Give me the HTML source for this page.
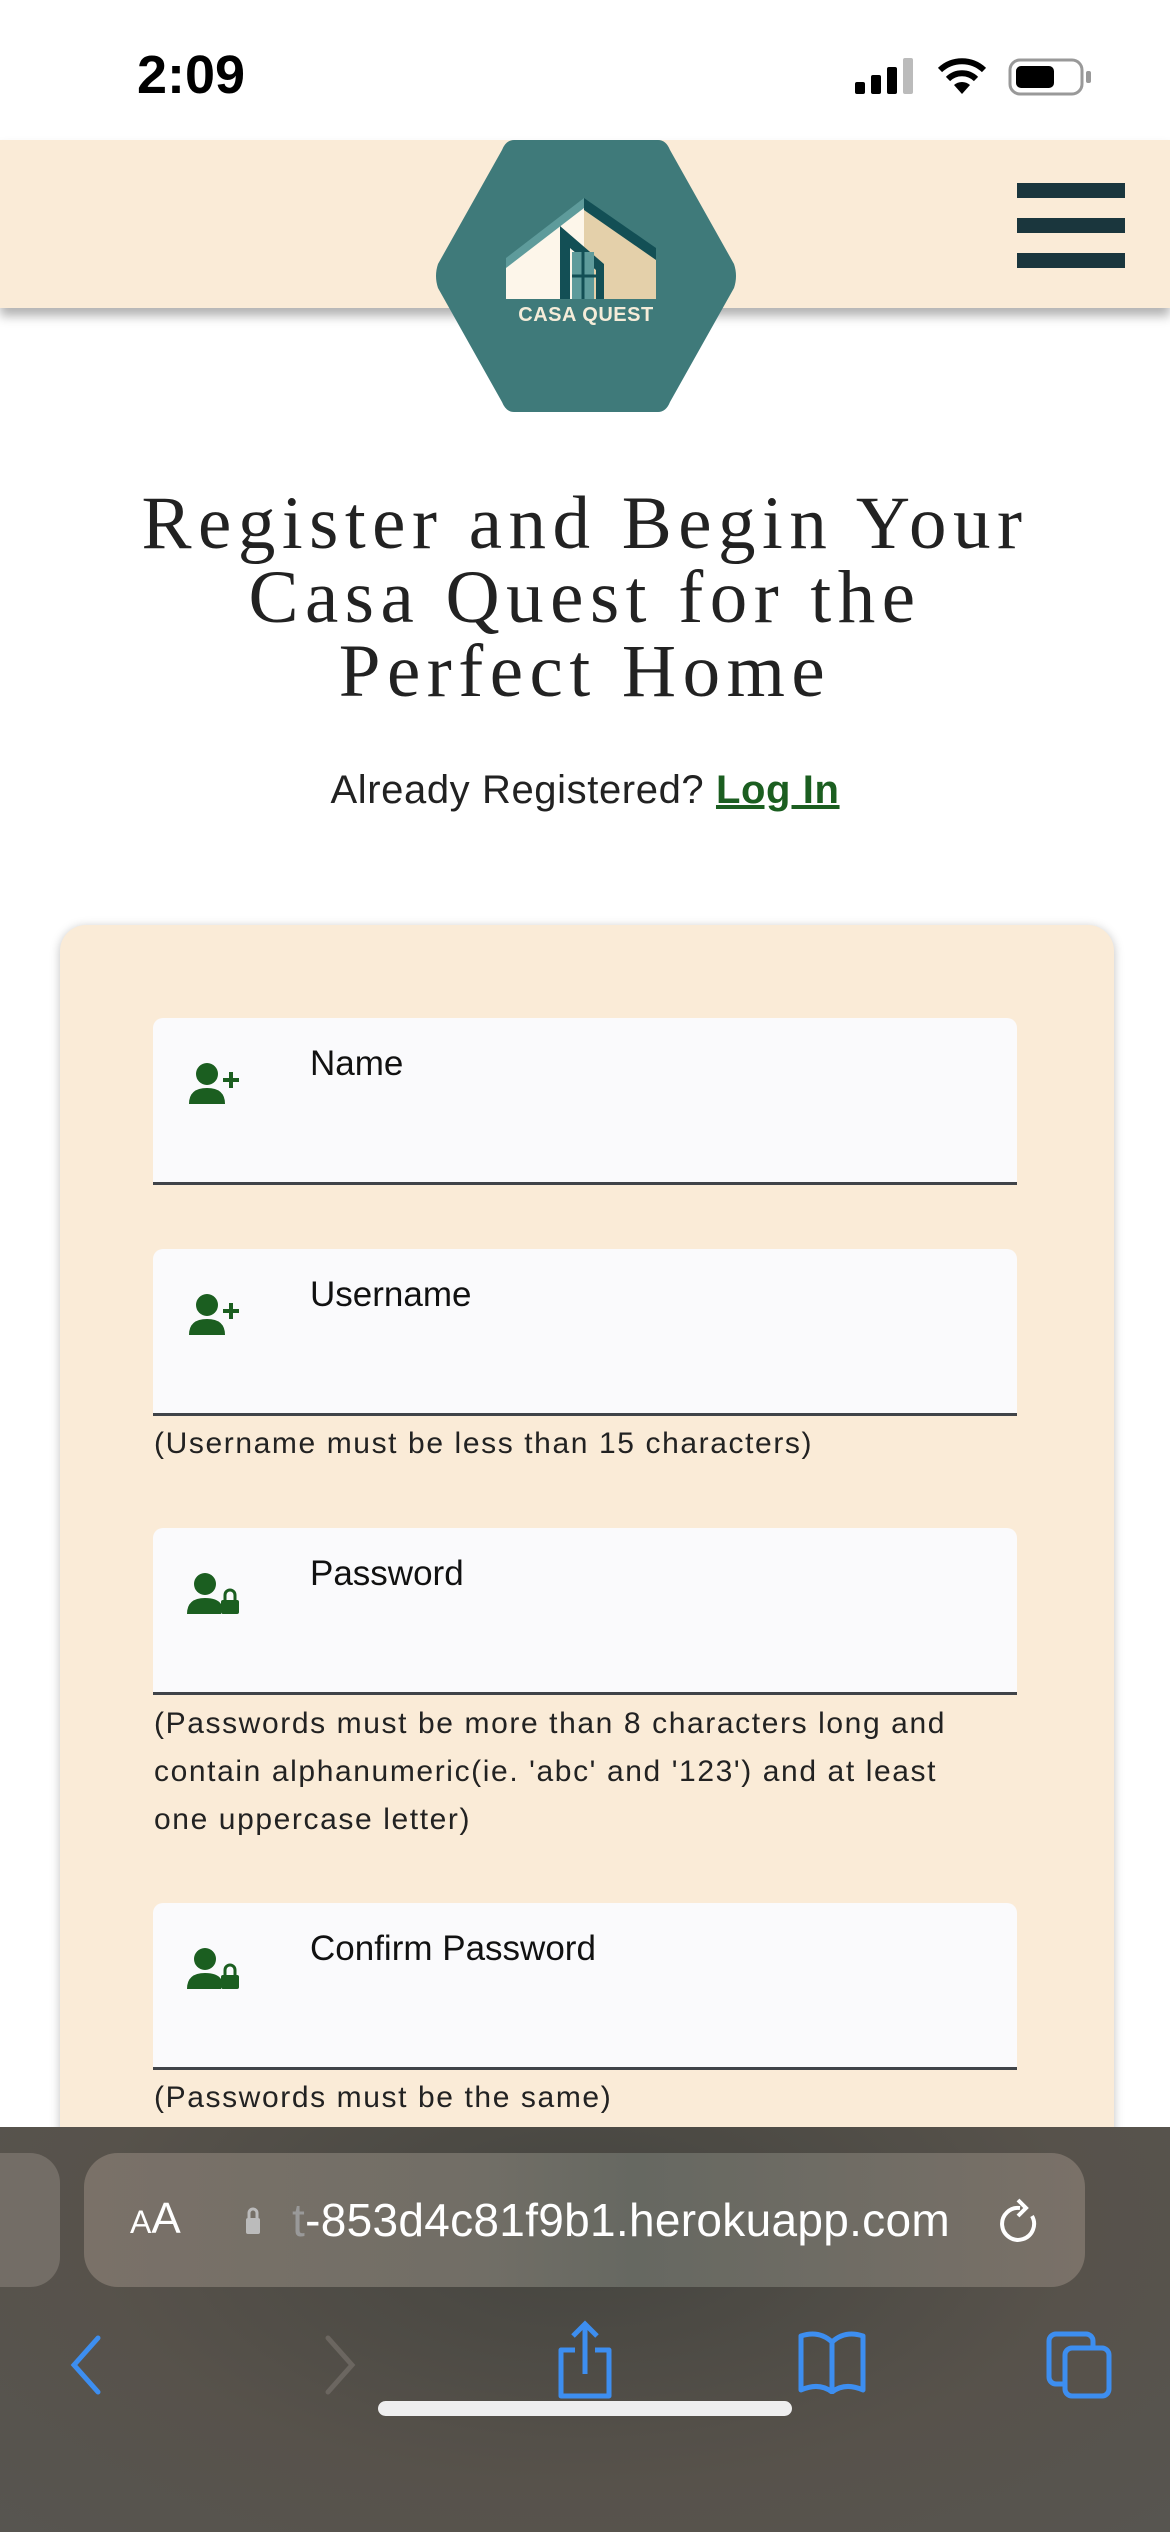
<!DOCTYPE html>
<html><head><meta charset="utf-8"><style>
*{margin:0;padding:0;box-sizing:border-box}
body{width:1170px;height:2532px;position:relative;overflow:hidden;background:#fff;font-family:"Liberation Sans",sans-serif}
.abs{position:absolute}
.hdr{left:0;top:140px;width:1170px;height:168px;background:#faebd7;box-shadow:0 8px 10px rgba(0,0,0,.3)}
.bar{left:1017px;width:108px;height:15px;background:#1a363d}
h1{position:absolute;left:0;width:1170px;top:487px;text-align:center;font-family:"Liberation Serif",serif;font-weight:normal;font-size:75px;line-height:74px;letter-spacing:6.5px;color:#222}
.card{left:60px;top:925px;width:1054px;height:1300px;background:#faebd7;border-radius:26px;box-shadow:0 2px 10px rgba(0,0,0,.25)}
.inp{left:153px;width:864px;height:167px;background:#fafafc;border-bottom:3px solid #3f4348;border-radius:10px 10px 0 0}
.lab{position:absolute;left:157px;top:26px;font-size:35px;color:#111}
.ico{position:absolute;left:34px;top:44px}
.help{left:154px;width:860px;font-size:30px;line-height:48px;color:#222;letter-spacing:1.6px}
</style></head><body>
<div class="abs" style="left:137px;top:44px;font-size:54px;font-weight:bold;color:#000">2:09</div>
<svg class="abs" style="left:855px;top:58px" width="60" height="36"><rect x="0" y="24" width="10" height="12" rx="2"/><rect x="16" y="17" width="10" height="19" rx="2"/><rect x="32" y="9" width="10" height="27" rx="2"/><rect x="48" y="0" width="10" height="36" rx="2" fill="#bbb"/></svg>
<svg class="abs" style="left:936px;top:56px" width="52" height="38" viewBox="0 0 52 38"><path d="M26 38 L18 29 A12 12 0 0 1 34 29 Z"/><path d="M12 23 A20 20 0 0 1 40 23" stroke="#000" stroke-width="6" fill="none"/><path d="M4 14 A32 32 0 0 1 48 14" stroke="#000" stroke-width="6" fill="none"/></svg>
<svg class="abs" style="left:1008px;top:58px" width="86" height="38"><rect x="2" y="2" width="72" height="34" rx="10" fill="none" stroke="#999" stroke-width="3"/><rect x="8" y="8" width="38" height="22" rx="5"/><rect x="78" y="13" width="5" height="12" rx="2" fill="#999"/></svg>
<div class="abs hdr"></div>
<div class="abs bar" style="top:183px"></div>
<div class="abs bar" style="top:218px"></div>
<div class="abs bar" style="top:253px"></div>
<svg class="abs" style="left:434px;top:140px" width="304" height="272" viewBox="0 0 304 272">
<path d="M80 0 L224 0 Q232 0 236 10 L300 124 Q304 136 300 148 L236 262 Q232 272 224 272 L80 272 Q72 272 68 262 L4 148 Q0 136 4 124 L68 10 Q72 0 80 0 Z" fill="#3f7a7a"/>
<path d="M72 122 L150 62 L150 159 L72 159 Z" fill="#fdf6ea"/>
<path d="M150 62 L222 112 L222 159 L150 159 Z" fill="#e4d0aa"/>
<path d="M72 118 L150 58 L150 68 L72 128 Z" fill="#5e9b9b"/>
<path d="M150 58 L222 108 L222 120 L150 70Z" fill="#134f55"/>
<path d="M126 86 L170 124 L170 159 L162 159 L162 130 L136 108 L136 159 L126 159 Z" fill="#134f55"/>
<rect x="138" y="112" width="22" height="47" fill="#5e9b9b"/>
<path d="M138 136 H162 M149 112 V159" stroke="#134f55" stroke-width="3"/>
<text x="152" y="181" text-anchor="middle" font-family="Liberation Sans" font-weight="bold" font-size="20" fill="#f5ecd9" letter-spacing="0.5">CASA QUEST</text>
</svg>
<h1>Register and Begin Your<br>Casa Quest for the<br>Perfect Home</h1>
<div class="abs" style="left:0;width:1170px;top:768px;text-align:center;font-size:40px;letter-spacing:0.6px;color:#222">Already Registered? <span style="color:#1b5e20;font-weight:bold;text-decoration:underline">Log In</span></div>
<div class="abs card"></div>
<div class="abs inp" style="top:1018px"><svg class="ico" width="56" height="44" viewBox="0 0 56 44"><circle cx="20" cy="12" r="11" fill="#1b5e20"/><path d="M2 42 Q2 26 20 26 Q38 26 38 42 Z" fill="#1b5e20"/><path d="M44 10 V26 M36 18 H52" stroke="#1b5e20" stroke-width="4"/></svg><div class="lab">Name</div></div>
<div class="abs inp" style="top:1249px"><svg class="ico" width="56" height="44" viewBox="0 0 56 44"><circle cx="20" cy="12" r="11" fill="#1b5e20"/><path d="M2 42 Q2 26 20 26 Q38 26 38 42 Z" fill="#1b5e20"/><path d="M44 10 V26 M36 18 H52" stroke="#1b5e20" stroke-width="4"/></svg><div class="lab">Username</div></div>
<div class="abs help" style="top:1420px">(Username must be less than 15 characters)</div>
<div class="abs inp" style="top:1528px"><svg class="ico" width="56" height="44" viewBox="0 0 56 44"><circle cx="18" cy="12" r="11" fill="#1b5e20"/><path d="M0 42 Q0 26 18 26 Q30 26 34 32 L34 42 Z" fill="#1b5e20"/><rect x="34" y="28" width="18" height="14" rx="2" fill="#1b5e20"/><path d="M38 28 V23 A5 5 0 0 1 48 23 V28" stroke="#1b5e20" stroke-width="3" fill="none"/></svg><div class="lab">Password</div></div>
<div class="abs help" style="top:1700px;width:820px">(Passwords must be more than 8 characters long and contain alphanumeric(ie. 'abc' and '123') and at least one uppercase letter)</div>
<div class="abs inp" style="top:1903px"><svg class="ico" width="56" height="44" viewBox="0 0 56 44"><circle cx="18" cy="12" r="11" fill="#1b5e20"/><path d="M0 42 Q0 26 18 26 Q30 26 34 32 L34 42 Z" fill="#1b5e20"/><rect x="34" y="28" width="18" height="14" rx="2" fill="#1b5e20"/><path d="M38 28 V23 A5 5 0 0 1 48 23 V28" stroke="#1b5e20" stroke-width="3" fill="none"/></svg><div class="lab">Confirm Password</div></div>
<div class="abs help" style="top:2074px">(Passwords must be the same)</div>
<div class="abs" style="left:0;top:2127px;width:1170px;height:405px;background:radial-gradient(ellipse at 50% 25%,#44443f,#57524b 60%,#575550)"></div>
<div class="abs" style="left:-40px;top:2153px;width:100px;height:134px;border-radius:30px;background:#736d66"></div>
<div class="abs" style="left:84px;top:2153px;width:1001px;height:134px;border-radius:34px;background:linear-gradient(90deg,#7a7168,#716e66 40%,#666861 55%,#7a7168)"></div>
<div class="abs" style="left:130px;top:2194px;color:#fff;font-size:44px"><span style="font-size:32px">A</span>A</div>
<svg class="abs" style="left:246px;top:2205px" width="14" height="30"><path d="M3 13 V8 A4 4 0 0 1 11 8 V13" stroke="#bbb" stroke-width="3" fill="none"/><rect x="0" y="13" width="14" height="16" rx="2" fill="#bbb"/></svg>
<div class="abs" style="left:292px;top:2193px;color:#fff;font-size:46px;letter-spacing:0.3px"><span style="color:#999">t</span>-853d4c81f9b1.herokuapp.com</div>
<svg class="abs" style="left:996px;top:2198px" width="44" height="50" viewBox="0 0 44 50"><path d="M24 10 A16 16 0 1 0 36 18" stroke="#fff" stroke-width="4" fill="none"/><path d="M22 2 L30 10 L22 18" stroke="#fff" stroke-width="4" fill="none"/></svg>
<svg class="abs" style="left:68px;top:2335px" width="36" height="60"><path d="M30 3 L6 30 L30 57" stroke="#3d8ef0" stroke-width="5" fill="none" stroke-linecap="round"/></svg>
<svg class="abs" style="left:322px;top:2335px" width="36" height="60"><path d="M6 3 L30 30 L6 57" stroke="#6b6660" stroke-width="5" fill="none" stroke-linecap="round"/></svg>
<svg class="abs" style="left:555px;top:2320px" width="60" height="80"><path d="M20 30 H6 V76 H54 V30 H40" stroke="#3d8ef0" stroke-width="5" fill="none" stroke-linejoin="round"/><path d="M30 4 V54 M18 16 L30 4 L42 16" stroke="#3d8ef0" stroke-width="5" fill="none"/></svg>
<svg class="abs" style="left:795px;top:2330px" width="74" height="64"><path d="M37 12 Q24 0 6 6 V60 Q24 52 37 62 Q50 52 68 60 V6 Q50 0 37 12 Z M37 12 V62" stroke="#3d8ef0" stroke-width="5" fill="none" stroke-linejoin="round"/></svg>
<svg class="abs" style="left:1045px;top:2330px" width="70" height="70"><rect x="4" y="4" width="44" height="50" rx="7" stroke="#3d8ef0" stroke-width="5" fill="none"/><rect x="20" y="18" width="44" height="48" rx="7" stroke="#3d8ef0" stroke-width="5" fill="#57524b"/></svg>
<div class="abs" style="left:378px;top:2401px;width:414px;height:15px;border-radius:8px;background:#eee"></div>
</body></html>
